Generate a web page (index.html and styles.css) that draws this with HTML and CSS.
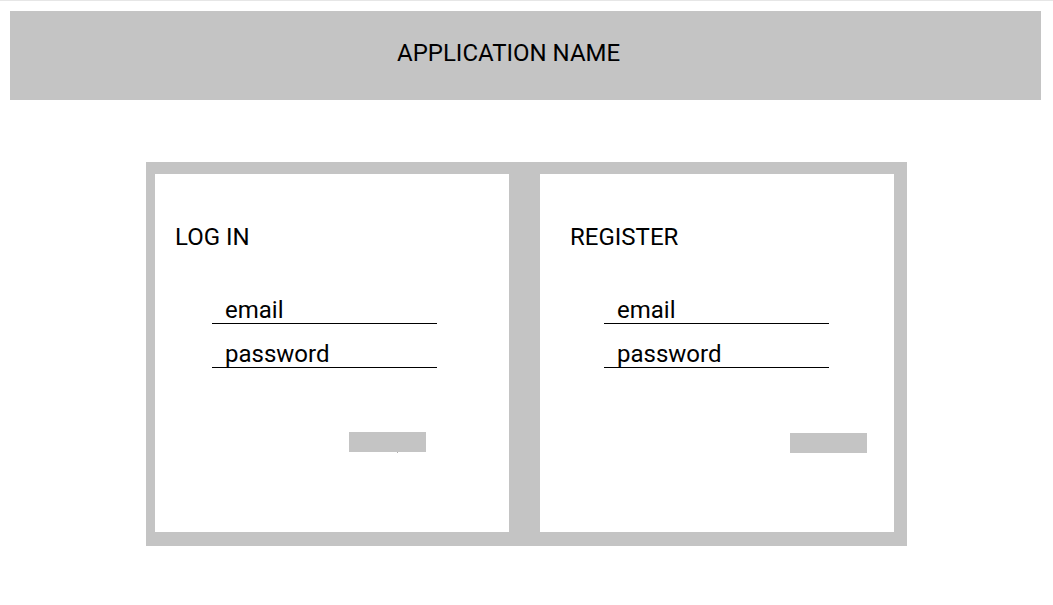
FILE: index.html
```html
<!DOCTYPE html>
<html lang="en">
<head>
<meta charset="utf-8">
<title>Application Name</title>
<link rel="stylesheet" href="styles.css">
</head>
<body>
<div class="topline"></div>
<header class="appbar">
  <h1 class="appbar-title">APPLICATION NAME</h1>
</header>
<main class="stage">
  <div class="frame">
    <section class="card card-login">
      <h2 class="card-title">LOG IN</h2>
      <div class="fields">
        <div class="field">email</div>
        <div class="field">password</div>
      </div>
      <div class="btn"></div>
    </section>
    <section class="card card-register">
      <h2 class="card-title">REGISTER</h2>
      <div class="fields">
        <div class="field">email</div>
        <div class="field">password</div>
      </div>
      <div class="btn"></div>
    </section>
  </div>
</main>
</body>
</html>
```
FILE: styles.css
```css
* { box-sizing: border-box; }
html, body { margin: 0; padding: 0; background: #fff; }
body {
  font-family: Roboto, "Liberation Sans", sans-serif;
  color: #000;
  width: 1053px;
  height: 605px;
  overflow: hidden;
}
.topline {
  height: 1px;
  background: #e6e6e6;
}
.appbar {
  margin: 10px 0 0 10px;
  width: 1031px;
  height: 89px;
  background: #c4c4c4;
  padding: 28px 0 0 387px;
}
.appbar-title {
  margin: 0;
  font-size: 24px;
  font-weight: 400;
  line-height: 28px;
}
.stage {
  padding: 62px 0 0 146px;
}
.frame {
  width: 761px;
  height: 384px;
  background: #c4c4c4;
  padding: 12px 13px 14px 9px;
  display: flex;
  gap: 31px;
}
.card {
  width: 354px;
  height: 358px;
  background: #fff;
  padding-top: 49px;
  display: flex;
  flex-direction: column;
}
.card-title {
  margin: 0;
  font-size: 24px;
  font-weight: 400;
  line-height: 28px;
}
.card-login .card-title { padding-left: 20px; }
.card-register .card-title { padding-left: 30px; }
.fields {
  margin-top: 45px;
  display: flex;
  flex-direction: column;
  gap: 16px;
  width: 225px;
}
.card-login .fields { margin-left: 57px; }
.card-register .fields { margin-left: 64px; }
.field {
  height: 28px;
  padding: 1px 0 0 13px;
  line-height: 26px;
  font-size: 24px;
  border-bottom: 1px solid #000;
}
.btn {
  width: 77px;
  height: 20px;
  background: #c4c4c4;
  position: relative;
}
.card-login .btn { margin: 64px 0 0 194px; }
.card-register .btn { margin: 65px 0 0 250px; }
.card-login .btn::after {
  content: "";
  position: absolute;
  left: 48px;
  top: 20px;
  width: 1px;
  height: 1px;
  background: #b0b0b0;
}
```
